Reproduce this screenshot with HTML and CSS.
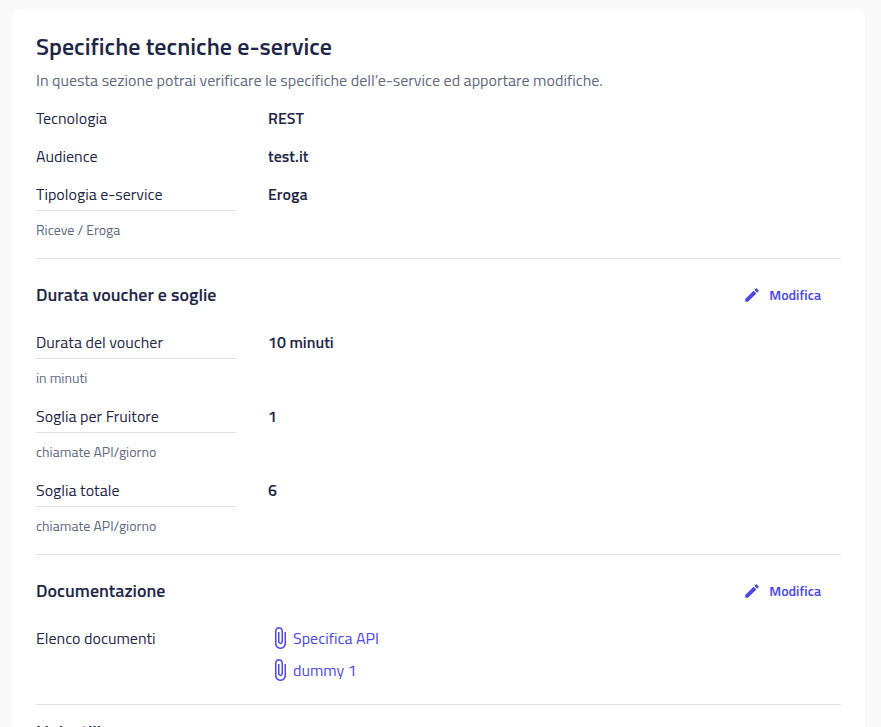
FILE: index.html
```html
<!DOCTYPE html>
<html lang="it">
<head>
<meta charset="utf-8">
<meta name="viewport" content="width=device-width, initial-scale=1">
<title>Specifiche tecniche e-service</title>
<link rel="stylesheet" href="styles.css">
</head>
<body>
<svg class="sprite" aria-hidden="true">
  <symbol id="pencil" viewBox="0 0 24 24"><path d="M3 17.25V21h3.75L17.81 9.94l-3.75-3.75L3 17.25zM20.71 7.04c.39-.39.39-1.02 0-1.41l-2.34-2.34c-.39-.39-1.02-.39-1.41 0l-1.83 1.83 3.75 3.75 1.83-1.83z"/></symbol>
  <symbol id="clip" viewBox="0 0 24 24"><path d="M16.5 6v11.5c0 2.21-1.79 4-4 4s-4-1.79-4-4V5c0-1.38 1.12-2.5 2.5-2.5s2.5 1.12 2.5 2.5v10.5c0 .55-.45 1-1 1s-1-.45-1-1V6H10v9.500c0 1.380 1.120 2.500 2.500 2.500s2.500-1.120 2.500-2.500V5c0-2.210-1.790-4-4-4S7 2.790 7 5v12.500c0 3.040 2.460 5.500 5.500 5.500s5.500-2.460 5.500-5.500V6h-1.500z"/></symbol>
</svg>
<main class="card">
  <header class="intro">
    <h1>Specifiche tecniche e-service</h1>
    <p>In questa sezione potrai verificare le specifiche dell’e-service ed apportare modifiche.</p>
  </header>
  <section class="block">
    <dl class="rows">
      <div class="row"><dt>Tecnologia</dt><dd>REST</dd></div>
      <div class="row"><dt>Audience</dt><dd>test.it</dd></div>
      <div class="row"><dt><span class="label">Tipologia e-service</span><small>Riceve / Eroga</small></dt><dd>Eroga</dd></div>
    </dl>
  </section>
  <section class="block">
    <div class="head"><h2>Durata voucher e soglie</h2><button type="button" class="edit"><svg aria-hidden="true"><use href="#pencil"/></svg>Modifica</button></div>
    <dl class="rows spaced">
      <div class="row"><dt><span class="label">Durata del voucher</span><small>in minuti</small></dt><dd>10 minuti</dd></div>
      <div class="row"><dt><span class="label">Soglia per Fruitore</span><small>chiamate API/giorno</small></dt><dd>1</dd></div>
      <div class="row"><dt><span class="label">Soglia totale</span><small>chiamate API/giorno</small></dt><dd>6</dd></div>
    </dl>
  </section>
  <section class="block">
    <div class="head"><h2>Documentazione</h2><button type="button" class="edit"><svg aria-hidden="true"><use href="#pencil"/></svg>Modifica</button></div>
    <dl class="rows">
      <div class="row"><dt>Elenco documenti</dt><dd class="docs">
        <a href="#specifica"><svg aria-hidden="true"><use href="#clip"/></svg>Specifica API</a>
        <a href="#dummy"><svg aria-hidden="true"><use href="#clip"/></svg>dummy 1</a>
      </dd></div>
    </dl>
  </section>
  <section class="block">
    <h2>Link utili</h2>
  </section>
</main>
</body>
</html>
```
FILE: styles.css
```css
* { box-sizing: border-box; }
html { height: 100%; overflow: hidden; }
body {
  margin: 0;
  height: 100%;
  overflow: hidden;
  padding: 9px 16px 0 12px;
  background: #f9f9f9;
  color: #1f2747;
  font: 400 16px/24px "Titillium Web", Roboto, sans-serif;
}
.sprite { display: none; }
.card {
  padding: 23px 24px;
  border-radius: 8px;
  background: #fff;
}
h1, h2, p, dl, dd { margin: 0; }
h1 { font-size: 24px; line-height: 28px; font-weight: 600; }
h2 { font-size: 18px; line-height: 24px; font-weight: 600; }
.intro p { margin-top: 8px; color: #5f6980; }
.intro { margin-bottom: 14px; }
.block + .block {
  margin-top: 18px;
  padding-top: 15px;
  border-top: 1px solid #e1e1e9;
}
.head {
  display: flex;
  align-items: center;
  justify-content: space-between;
  margin-bottom: 14px;
}
.edit {
  display: flex;
  align-items: center;
  gap: 8px;
  height: 42px;
  padding: 0 20px;
  border: 0;
  background: none;
  color: #4b48e5;
  font: inherit;
  font-size: 14px;
  font-weight: 600;
  cursor: pointer;
}
.edit svg { width: 18px; height: 18px; fill: currentColor; }
.rows { display: grid; gap: 14px; }
.rows.spaced { gap: 16px; }
.row {
  display: grid;
  grid-template-columns: 200px 1fr;
  column-gap: 32px;
}
dd { font-weight: 600; }
.label {
  display: block;
  padding-bottom: 4px;
  border-bottom: 1px solid #e1e1e9;
}
small {
  display: block;
  margin-top: 9px;
  color: #5f6980;
  font-size: 14px;
  line-height: 20px;
}
.docs {
  display: grid;
  gap: 8px;
  justify-items: start;
  padding-bottom: 4px;
  font-weight: 400;
}
.docs a {
  display: flex;
  align-items: center;
  gap: 1px;
  color: #4b48e5;
  text-decoration: none;
}
.docs svg { width: 24px; height: 24px; fill: currentColor; }
```
